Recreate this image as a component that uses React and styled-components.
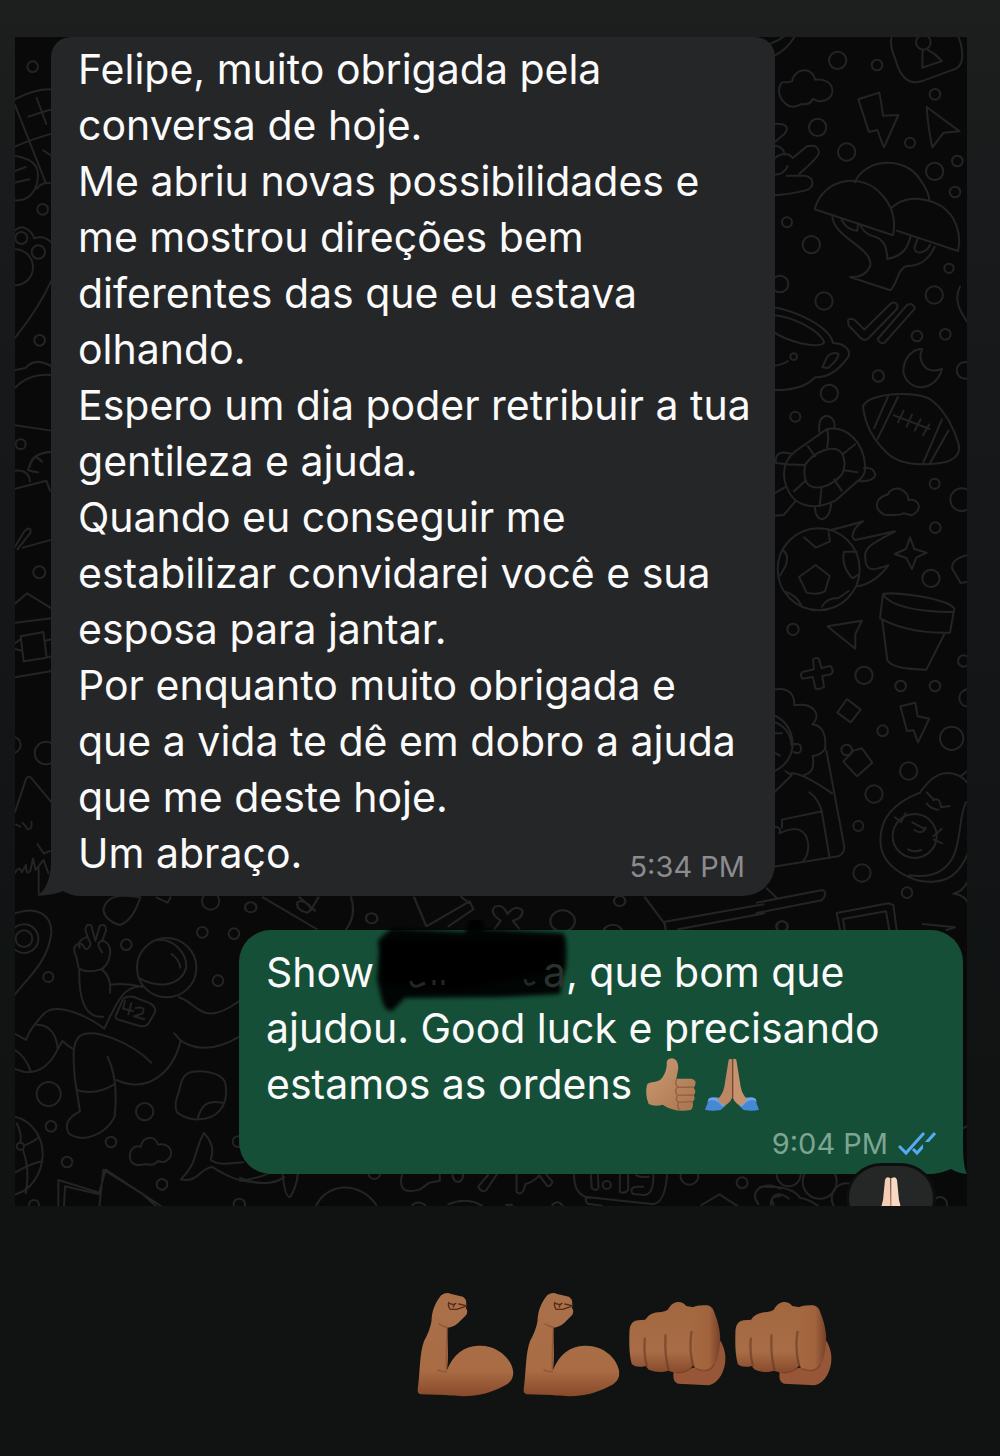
import React from 'react'
import styled, { createGlobalStyle } from 'styled-components'

const GlobalStyle = createGlobalStyle`
  * {
    box-sizing: border-box;
  }
  body {
    margin: 0;
    background: #101312;
    font-family: Inter, "Open Sans", sans-serif;
  }
`;

const Page = styled.main`
  min-height: 100vh;
  padding: 37px 33px 56px 15px;
  background: linear-gradient(#1c1f1d 0, #17191b 20%, #131516 50%, #101312 80%, #101312 100%);
`;

const Chat = styled.section`
  position: relative;
  display: flex;
  flex-direction: column;
  gap: 34px;
  padding: 0 4px 32px 36px;
  background: #090909;
  overflow: hidden;
`;

const Wallpaper = styled.svg`
  position: absolute;
  inset: 0;
  width: 100%;
  height: 100%;
`;

const Bubble = styled.article`
  position: relative;
  width: 100%;
  max-width: 724px;
  align-self: ${props => (props.$own ? 'flex-end' : 'flex-start')};
  padding: ${props => (props.$own ? '14px 27px 12px' : '4px 30px 15px 27px')};
  border-radius: ${props => (props.$own ? '32px' : '20px 20px 32px 32px')};
  background: ${props => (props.$own ? '#154f38' : '#252628')};
  color: #fafafa;
`;

const Tail = styled.svg`
  position: absolute;
  bottom: 0;
  ${props => (props.$own ? 'right: -4px;' : 'left: -14px;')}
  width: 44px;
  height: 32px;
  fill: ${props => (props.$own ? '#154f38' : '#252628')};
`;

const Line = styled.p`
  position: relative;
  margin: 0;
  font-size: 41px;
  line-height: 56px;
  white-space: nowrap;
`;

const LastLine = styled.div`
  display: flex;
  align-items: flex-end;
  justify-content: space-between;
`;

const Meta = styled.footer`
  display: flex;
  align-items: center;
  justify-content: flex-end;
  gap: 10px;
  height: ${props => (props.$own ? '50px' : '28px')};
  padding-top: ${props => (props.$own ? '14px' : '0')};
  color: ${props => (props.$own ? '#7da592' : '#8b8c8f')};
`;

const Time = styled.time`
  font-size: 29px;
  line-height: 28px;
`;

const Ticks = styled.svg`
  flex: none;
  width: 38px;
  height: 26px;
  fill: none;
  stroke: #57a9f4;
  stroke-width: 3;
`;

const Redacted = styled.span`
  position: relative;
  display: inline-block;
  width: 192px;
  text-align: right;
`;

const Ghost = styled.span`
  position: relative;
  color: #2b312f;
`;

const Scribble = styled.svg`
  position: absolute;
  left: -4px;
  top: -24px;
  width: 210px;
  height: 100px;
`;

const Emoji = styled.svg`
  width: ${props => props.$width};
  height: ${props => props.$height};
  margin-left: ${props => props.$space || '0'};
  vertical-align: -12px;
  overflow: visible;
`;

const Reaction = styled.div`
  position: absolute;
  right: 30px;
  top: 100%;
  display: flex;
  justify-content: center;
  width: 84px;
  height: 64px;
  margin-top: -8px;
  padding-top: 10px;
  border-radius: 32px;
  background: #252727;
  box-shadow: 0 0 0 3px #0d0f0e;
`;

const Cheer = styled.section`
  display: flex;
  justify-content: flex-end;
  gap: 9px;
  padding: 86px 135px 0 0;
`;

// each patch is drawn on its own grid and scaled down into place
const patches = [
  {
    at: 'translate(760 20) scale(.3333)',
    circles: [[233, 121, 26], [351, 135, 16], [525, 223, 16], [173, 322, 26], [450, 368, 15], [260, 396, 26], [524, 454, 26], [592, 423, 16], [585, 516, 16], [81, 607, 15], [154, 674, 26], [567, 745, 14], [523, 825, 26], [192, 843, 26], [60, 792, 25], [490, 67, 22]],
    paths: [
      'M20 75Q65 60 78 42M38 110Q85 88 108 42',
      'M65 188C68 185 85 188 96 184C103 143 158 138 165 179C229 170 236 244 176 244L158 237Q150 256 126 252Q94 270 75 249C53 230 53 203 65 188Z',
      'M397 40C385 85 404 103 412 137Q436 199 484 184L574 151Q606 145 607 108C606 70 599 60 590 40M488 88L487 143L546 123Q527 102 502 88',
      'M295 238L358 218L363 244L369 287L415 285L372 382L365 365L352 330L327 336Z',
      'M500 261L599 334L551 338L517 382Q505 330 500 261Z',
      'M40 312C82 309 88 324 73 342L40 370M40 376Q70 380 74 402Q50 404 40 421M74 402Q90 402 98 414L141 379Q175 371 177 399Q172 415 118 461M40 464Q73 465 83 438M80 467H134C168 475 163 505 134 512Q84 524 40 526',
      'M164 568C188 473 308 455 366 525Q413 575 399 646ZM284 487C319 412 434 410 478 475Q506 513 508 540M397 562C439 520 538 530 579 594Q606 642 594 693L410 632',
      'M217 592C228 658 338 681 331 738Q314 775 270 771L391 811C412 793 413 743 442 738C485 737 508 716 524 680M245 600Q262 631 292 632L294 613M300 612Q309 638 335 647C371 655 381 680 382 717C431 708 444 681 452 648M473 656L463 684Q465 700 483 697Q502 693 510 675',
    ],
  },
  {
    at: 'translate(760 290) scale(.3333)',
    circles: [[471, 138, 16], [556, 133, 16], [355, 258, 17], [208, 310, 26], [106, 380, 15], [615, 241, 25], [524, 581, 15], [605, 629, 34], [526, 713, 16], [513, 865, 26], [101, 200, 10], [176, 838, 123]],
    paths: [
      'M600 -10C580 30 600 65 625 100',
      'M264 90Q276 82 286 92L313 119L391 42Q405 31 413 47Q413 56 405 63L332 138Q315 160 299 141L266 106ZM353 147L440 46Q458 35 465 55L374 158Q362 165 353 147Z',
      'M35 50C110 63 207 109 219 159C263 160 273 188 264 202Q220 263 166 262Q122 306 35 299M35 75C104 79 181 125 193 157C174 178 83 157 35 122M35 228Q66 226 84 213M187 232L202 199Q220 183 236 193Q233 210 204 234Z',
      'M479 177C455 182 430 205 430 246C443 307 525 310 546 237Q507 250 490 225Q474 201 487 178Z',
      'M309 350C323 306 478 300 517 332C558 365 584 421 596 463Q604 500 561 515C487 529 418 526 379 487C336 444 316 405 309 350ZM384 320L342 415M414 321L353 446M546 388L489 520M565 422L510 520M402 376L509 417M431 362L414 397M456 374L440 410M482 388L464 422M508 403L489 436',
      'M201 417C265 407 311 461 315 525Q319 558 292 574L226 632C150 668 91 645 74 572Q64 515 107 483ZM136 523C165 485 221 460 246 490Q261 518 247 552C211 594 161 604 140 579Q128 554 136 523ZM201 417Q208 446 201 473M285 463L252 490M254 541L292 547M223 569L245 602M185 590L179 648M138 571L102 604M131 525L79 523M143 468L165 499M178 425Q173 382 199 377Q226 381 224 414M81 523L48 519Q44 490 69 487L95 491M312 535Q340 529 346 554Q342 576 291 574M165 652C166 704 210 697 213 643M40 612L79 590M108 632L71 675L40 677',
      'M355 630C373 609 384 622 388 605C412 584 445 604 445 630C481 623 489 663 454 676L431 670Q420 678 372 674Q341 656 355 630Z',
      'M205 722Q279 704 309 694C285 708 266 742 286 750Q336 740 405 724C338 760 309 772 316 807C319 853 349 837 385 826Q347 878 293 889',
      'M117 861L167 825L209 858L195 904Q170 916 140 908ZM132 742L168 773L210 754L206 728M66 780Q88 790 78 825L60 857M252 785H290M252 785Q243 830 278 865L294 855M78 906Q110 916 126 950M186 950Q199 924 235 924L266 903',
      'M450 742L463 777L500 788L469 803L456 837L439 804L404 792L438 777Z',
      'M625 795Q575 805 576 835L602 879L625 875',
    ],
  },
  {
    at: 'translate(760 580) scale(.3333)',
    circles: [[99, 148, 17], [312, 286, 26], [422, 318, 16], [525, 318, 16], [611, 243, 17], [624, 354, 26], [368, 452, 16], [575, 475, 35], [446, 573, 26], [342, 642, 26], [295, 738, 15], [306, 879, 26], [441, 938, 16], [67, 1040, 16], [260, 510, 16], [464, 768, 66]],
    paths: [
      'M369 42C397 35 561 53 583 86L570 158Q446 161 360 115ZM371 46C399 83 488 95 578 96M367 123L382 241Q396 268 499 269L553 163',
      'M202 139L306 122L286 162V206Z',
      'M159 238Q176 229 178 240L184 264L211 258Q224 274 213 283L187 288L192 321Q178 330 167 326L158 291L127 296Q117 282 130 275L162 268Z',
      'M232 398L261 357L302 389L272 427Z',
      'M421 379L466 368L473 409L508 416L474 487L461 451L441 453Z',
      'M250 545L281 512L306 505L337 548L291 589Z',
      'M40 329C83 320 104 340 103 376C157 366 188 402 157 433C189 436 200 468 195 507Q182 526 158 528C164 563 157 577 132 586M40 405C111 433 123 539 40 575M40 425C80 438 94 471 94 495M101 493Q126 487 123 510Q119 524 101 516M76 573L95 586L40 640M95 580Q127 579 216 640M199 512L253 800Q253 820 235 829L40 860M148 637Q181 661 187 704L208 828M187 694L66 719V743M40 740Q67 740 58 760Q138 723 145 795Q145 830 127 846M45 460H66M47 520L60 527',
      'M480 638C503 607 526 580 561 579Q601 579 625 612M480 638C410 665 355 713 362 794C370 867 466 914 529 904Q591 900 624 820M448 886C524 897 566 867 585 818C607 744 597 713 618 666M602 589L623 572M500 637L522 660M500 670Q514 688 536 689M520 660Q540 650 543 682L569 678M405 712L423 727L437 700M520 769L545 747M521 779L547 790M444 808Q461 818 484 810M457 727L496 748M463 750Q487 767 497 742',
      'M20 925L50 954M-10 968L188 930Q205 939 185 961L-10 999M580 941Q610 935 625 900M580 941Q612 943 625 970M230 999L385 970L400 975L410 1050M240 1050L230 999M254 1050L249 1017L378 994L388 1050M488 1032L585 1042L560 1050',
    ],
  },
  {
    at: 'translate(0 860) scale(.3333)',
    circles: [[607, 217, 16], [702, 221, 16], [379, 254, 16], [145, 351, 15], [654, 362, 16], [146, 702, 36], [434, 755, 26], [153, 799, 16], [333, 846, 16], [201, 906, 16], [486, 973, 16], [632, 123, 26], [714, 845, 16], [102, 1035, 15], [718, 1033, 17], [500, 323, 89], [72, 236, 25], [72, 236, 43], [61, 859, 11]],
    paths: [
      'M45 160C110 137 156 164 154 220C142 307 91 344 45 403',
      'M310 150C318 110 350 100 421 112Q399 181 360 195Q316 183 310 150ZM470 113L503 128L512 112',
      'M236 325L229 290Q215 262 231 254Q244 245 252 261C257 277 282 258 265 237L256 210Q259 187 274 197L286 242L299 198Q319 188 318 211L307 242C348 250 329 323 299 329Q263 341 236 325ZM239 263Q231 241 258 232M307 242Q284 247 307 277M238 326C236 399 247 477 310 470M306 329Q335 352 330 398M330 374Q376 368 427 380C371 375 350 427 313 506C269 472 173 425 134 459C108 486 84 520 78 540L45 522',
      'M110 494C155 493 171 533 173 568Q137 642 73 636L45 627M173 568L187 543Q201 556 221 568M45 570Q78 590 92 634',
      'M454 608C393 548 280 501 239 528C211 554 223 617 224 652L240 754Q186 781 206 820C249 853 322 820 344 769Q356 658 323 591M229 690C272 704 308 694 343 673M350 660C442 702 519 638 542 542L523 520M537 412C596 430 605 505 718 423M541 541Q617 591 718 530',
      'M348 465L370 416Q384 406 402 411L451 430Q469 441 465 457L446 490Q435 502 419 498L361 481Q343 478 348 465ZM375 423L369 446L399 453M394 430L385 463M407 444Q440 438 427 461L402 469L433 478',
      'M467 240C519 233 561 277 559 323C542 379 475 387 416 354M515 282Q540 302 541 323',
      'M572 637C600 631 656 633 675 665C688 720 665 768 614 776Q569 785 532 758C518 733 535 707 540 682Q547 643 572 637ZM594 774C605 731 626 719 671 729',
      'M397 867Q407 855 423 860C427 826 467 826 474 854C505 847 521 873 510 892Q495 912 474 903Q460 919 438 912Q400 922 392 901Q385 881 397 867Z',
      'M45 770C98 782 131 836 128 890C124 940 96 990 45 1004M50 790Q66 820 61 848M73 857Q109 841 115 832M69 870Q91 932 77 1000M45 938Q91 911 127 904',
      'M612 819C581 872 594 909 543 958C593 970 600 925 636 921C678 946 705 965 785 969M612 819Q648 857 632 900C660 919 694 909 730 907',
      'M175 1040V960L298 998L317 929L485 1040M192 1040L195 979L298 1003M298 1040L310 929L425 1000L470 1040',
    ],
  },
  {
    at: 'translate(0 20) scale(.3333)',
    circles: [[98, 140, 16], [128, 568, 16], [64, 654, 18], [115, 696, 20], [45, 742, 54], [119, 961, 16], [62, 1273, 15]],
    paths: [
      'M45 238Q105 206 155 208M45 255L138 490M45 380Q94 358 155 341M85 290L155 268M110 234L139 312M45 407C115 419 119 451 111 490Q95 545 45 541M45 453L77 441M45 488L88 478M111 506Q120 488 150 489M130 391L155 408',
      'M45 632C66 609 94 631 103 655Q131 644 155 668M45 954Q120 860 155 780M45 1050L77 1044Q104 1010 155 1039M45 1104Q86 1060 155 1065M45 1216L155 1232M90 1340Q92 1300 155 1296M108 1310L126 1325',
    ],
  },
  {
    at: 'translate(0 450) scale(.3333)',
    circles: [[118, 367, 18], [138, 909, 34], [38, 885, 24]],
    paths: [
      'M45 62Q86 58 90 94M84 60Q98 4 155 6M84 60Q96 65 114 67M45 116L139 92L150 122M45 290L72 245Q92 225 92 247L52 298M69 293L155 269M45 461L81 430L155 475M45 518L155 505M62 559L130 546L140 623L71 634ZM45 580L60 569M45 597L63 602M135 572L155 568M139 620H155M45 682L155 663M45 1086L78 987Q87 972 96 987L155 1057M48 1124L61 1130M68 1119L84 1138Q98 1137 94 1116M112 1182L132 1211L150 1203M45 1268Q60 1245 65 1268L78 1245Q78 1278 91 1263L99 1226L107 1260L131 1230L145 1270M116 1255V1330',
    ],
  },
  {
    at: 'translate(240 1150) scale(.3444 .3333)',
    circles: [[1305, 78, 26], [1458, 98, 16], [390, 70, 17], [1065, 105, 12]],
    paths: [
      'M0 92Q53 85 84 70M0 84Q80 115 128 82M124 75Q131 142 145 142Q165 110 168 70M222 165C257 95 350 95 396 165M470 75C460 124 485 130 523 118L550 98L580 92V70M617 75Q620 96 635 96Q650 90 647 70M720 75L692 109Q698 128 715 121L745 74M803 75V126Q815 136 823 122L829 102Q853 95 869 76M869 76L893 109Q906 107 907 95L889 73',
      'M970 75C970 110 982 137 1012 143M1240 75C1235 140 1219 163 1196 162L1007 141Q999 152 1010 161L1050 167M1019 75L1021 114Q1037 127 1041 112L1039 75M1103 75L1103 126Q1120 132 1127 119V75M1150 75Q1160 84 1187 80M1200 75Q1202 132 1175 135L1140 132Q1130 113 1150 110H1171M500 165Q518 150 538 165M605 163Q657 140 702 167M773 165L790 164M907 165Q922 147 937 167M1340 165L1392 133L1443 167M1505 162C1480 127 1507 104 1545 107L1568 116M1550 165Q1534 139 1568 138',
    ],
  },
  {
    at: 'translate(240 870) scale(.3827 .3333)',
    circles: [[28, 112, 15], [344, 145, 15], [843, 153, 32], [992, 93, 15], [974, 190, 26], [1416, 169, 15]],
    paths: [
      'M60 82L200 177M150 97Q145 120 176 128Q190 119 181 106Q162 88 150 97ZM155 82L196 122M205 82L185 121M290 82Q305 135 278 177M455 82L487 169L600 94L610 118L545 169M578 80L598 99M665 177L681 152Q650 127 666 110Q688 101 699 132Q720 102 738 121Q740 145 713 152L730 177M1058 82L1110 162L1112 178M1110 155L1368 103M1145 178L1370 130',
    ],
  },
  {
    at: 'translate(760 1110) scale(.3333)',
    circles: [[179, 215, 51], [86, 193, 36], [260, 265, 45], [540, 282, 21]],
    paths: ['M0 231Q96 224 120 264Q145 265 180 292M32 285C34 253 55 242 86 266M610 55Q618 48 626 48'],
  },
];

const Doodles = () => (
  <Wallpaper viewBox="15 37 952 1169" preserveAspectRatio="xMinYMin slice" aria-hidden="true">
    {patches.map((patch, i) => (
      <g key={i} transform={patch.at} fill="none" stroke="#232424" strokeWidth="6" strokeLinejoin="round" strokeLinecap="round">
        {patch.circles.map(([x, y, r], n) => <circle key={n} cx={x} cy={y} r={r} />)}
        {patch.paths.map((d, n) => <path key={n} d={d} />)}
      </g>
    ))}
  </Wallpaper>
)

const ThumbsUp = () => (
  <Emoji $width="50px" $height="53px" $space="2px" viewBox="47 50 150 159" role="img" aria-label="Thumbs up">
    <defs>
      <linearGradient id="thumb" x1="0" y1="0" x2="1" y2="1">
        <stop offset="0" stopColor="#cb9b73" />
        <stop offset="1" stopColor="#a9744f" />
      </linearGradient>
    </defs>
    <path fill="url(#thumb)" d="M50 130Q53 123 75 121Q92 119 101 100Q111 82 109 63Q111 51 126 51Q144 54 144 81L138 112L184 112Q199 117 195 129Q194 136 190 139Q200 151 190 162Q197 173 187 181Q190 199 181 206C150 212 121 206 97 190Q74 197 55 188Q43 158 50 130Z" />
    <path fill="none" stroke="#8b573a" strokeWidth="4" strokeLinecap="round" opacity=".8" d="M139 113Q131 128 144 138L188 137M140 139Q131 151 142 162L187 161M142 163Q133 172 144 183L185 181M144 184Q139 195 147 204" />
  </Emoji>
)

const PrayingHands = () => (
  <Emoji $width="54px" $height="53px" $space="9px" viewBox="225 50 162 159" role="img" aria-label="Folded hands">
    <path fill="#4788d4" d="M238 171Q248 166 262 168L274 174L286 193L272 206Q244 211 225 205ZM374 171Q364 166 350 168L340 174L328 193L341 206Q370 211 387 205Z" />
    <path fill="#6ba9ec" d="M232 182Q244 170 264 182L280 197L284 193L268 173Q250 164 236 172ZM380 182Q368 170 349 182L334 197L330 193L346 173Q363 164 377 172Z" />
    <path fill="#bd8765" d="M296 55Q303 48 308 57V162Q306 181 285 193Q270 188 262 174Q278 160 283 136Z" />
    <path fill="#c7936f" d="M319 55Q312 48 307 57V162Q309 181 329 193Q343 188 352 174Q337 160 332 136Z" />
    <path fill="none" stroke="#754631" strokeWidth="4" d="M308 56V168" />
  </Emoji>
)

const Bicep = ({ id }) => (
  <Emoji $width="97px" $height="105px" viewBox="55 65 290 315" role="img" aria-label="Flexed biceps">
    <defs>
      <linearGradient id={id} x1="0" y1="0" x2="0" y2="1">
        <stop offset="0" stopColor="#a9714a" />
        <stop offset=".75" stopColor="#a96c45" />
        <stop offset="1" stopColor="#88492a" />
      </linearGradient>
    </defs>
    <path fill={`url(#${id})`} d="M57 354C64 300 62 247 76 211Q92 185 98 153C99 122 108 99 127 75Q143 64 157 71L192 79Q204 87 202 100Q204 108 201 112Q209 123 202 134L178 158Q163 171 146 172C145 218 151 257 144 300C163 252 198 224 244 226C294 226 334 261 342 298Q349 331 315 347C260 375 217 383 140 374L66 372Q54 370 57 354Z" />
    <path fill="none" stroke="#814627" strokeWidth="5" opacity=".5" d="M119 160Q133 170 146 171M146 174Q142 246 143 299M144 303Q133 306 116 298" />
    <path fill="none" stroke="#552a17" strokeWidth="4" strokeLinecap="round" d="M150 96Q146 107 154 117H174L200 108M151 99L165 103L171 99M180 101L201 106M166 103L163 110" />
  </Emoji>
)

const Fist = ({ id }) => (
  <Emoji $width="97px" $height="105px" viewBox="687 65 290 315" role="img" aria-label="Oncoming fist">
    <defs>
      <linearGradient id={id} x1="0" y1="0" x2="0" y2="1">
        <stop offset="0" stopColor="#a1673f" />
        <stop offset=".7" stopColor="#a86d46" />
        <stop offset="1" stopColor="#87492c" />
      </linearGradient>
      <linearGradient id={`${id}-side`}>
        <stop offset="0" stopColor="#a56941" />
        <stop offset=".6" stopColor="#a0633d" />
        <stop offset="1" stopColor="#784128" />
      </linearGradient>
    </defs>
    <path fill="#975637" d="M820 306Q817 337 833 340L925 345Q946 343 963 315C981 282 981 240 957 206L908 286Z" />
    <path fill={`url(#${id})`} d="M688 178Q692 151 713 150L735 148Q747 126 783 125Q794 124 803 118C819 88 846 91 858 107L880 111V285Q858 313 825 307L803 301Q778 311 746 298L736 287Q710 294 695 282C686 248 687 213 688 178Z" />
    <path fill={`url(#${id}-side)`} d="M878 111Q892 103 922 105Q939 109 944 130Q958 164 960 200C959 238 954 272 941 290Q914 307 889 296Q877 288 878 270Z" />
    <path fill="none" stroke="#683722" strokeWidth="7" opacity=".6" strokeLinecap="round" d="M734 205Q730 251 740 287M796 195Q793 255 805 298M874 185Q866 241 879 286" />
    <path fill="none" stroke="#6f3a22" strokeWidth="4" opacity=".6" d="M886 294Q924 312 943 282M827 307Q858 310 877 288" />
  </Emoji>
)

const message = [
  'Felipe, muito obrigada pela',
  'conversa de hoje.',
  'Me abriu novas possibilidades e',
  'me mostrou direções bem',
  'diferentes das que eu estava',
  'olhando.',
  'Espero um dia poder retribuir a tua',
  'gentileza e ajuda.',
  'Quando eu conseguir me',
  'estabilizar convidarei você e sua',
  'esposa para jantar.',
  'Por enquanto muito obrigada e',
  'que a vida te dê em dobro a ajuda',
  'que me deste hoje.',
];

export default function App() {
  return (
    <Page>
      <GlobalStyle />
      <Chat>
        <Doodles />
        <Bubble>
          <Tail viewBox="0 0 44 32" aria-hidden="true">
            <path d="M14 0C13 16 9 26 0 32Q18 31 26 27Q34 32 44 32V0Z" />
          </Tail>
          {message.map(line => <Line key={line}>{line}</Line>)}
          <LastLine>
            <Line>Um abraço.</Line>
            <Meta><Time dateTime="17:34">5:34 PM</Time></Meta>
          </LastLine>
        </Bubble>
        <Bubble $own>
          <Tail $own viewBox="0 0 44 32" aria-hidden="true">
            <path d="M40 0C40 16 41 26 44 32Q34 31 28 27Q18 32 0 32V0Z" />
          </Tail>
          <Line>
            Show
            <Redacted>
              <Scribble viewBox="0 0 210 100" aria-hidden="true">
                <defs>
                  <filter id="soft"><feGaussianBlur stdDeviation="2" /></filter>
                </defs>
                <g filter="url(#soft)">
                  <path d="M10 18L22 8L95 12L100 -2H112L114 9L193 13Q198 18 196 47L192 60L190 74L130 77L35 78L22 91Q14 92 11 76L7 60Z" opacity=".94" />
                  <path d="M8 20H190V50L165 54L90 70L12 64Z" />
                </g>
                <path d="M41 61Q41 67 48 66L55 63M64 60V65M73 60V65M155 59Q156 68 165 62" fill="none" stroke="#252525" strokeWidth="3" />
              </Scribble>
              <Ghost>a</Ghost>
            </Redacted>
            , que bom que
          </Line>
          <Line>ajudou. Good luck e precisando</Line>
          <Line>
            estamos as ordens <ThumbsUp /><PrayingHands />
          </Line>
          <Meta $own>
            <Time dateTime="21:04">9:04 PM</Time>
            <Ticks viewBox="0 0 38 26" role="img" aria-label="Read">
              <path d="M1 15L8 22L26 2" />
              <path d="M15 18L19 22L37 2" />
            </Ticks>
          </Meta>
          <Reaction>
            <svg width="30" height="42" viewBox="0 0 30 42" role="img" aria-label="Folded hands">
              <path fill="#f3cdb5" d="M14 2Q10 0 9 4L7 24L3 40H15Z" />
              <path fill="#f8dac4" d="M16 2Q20 0 21 4L23 24L27 40H15V2Z" />
              <path d="M15 2V42" stroke="#b98468" />
            </svg>
          </Reaction>
        </Bubble>
      </Chat>
      <Cheer>
        <Bicep id="arm-one" />
        <Bicep id="arm-two" />
        <Fist id="fist-one" />
        <Fist id="fist-two" />
      </Cheer>
    </Page>
  )
}
